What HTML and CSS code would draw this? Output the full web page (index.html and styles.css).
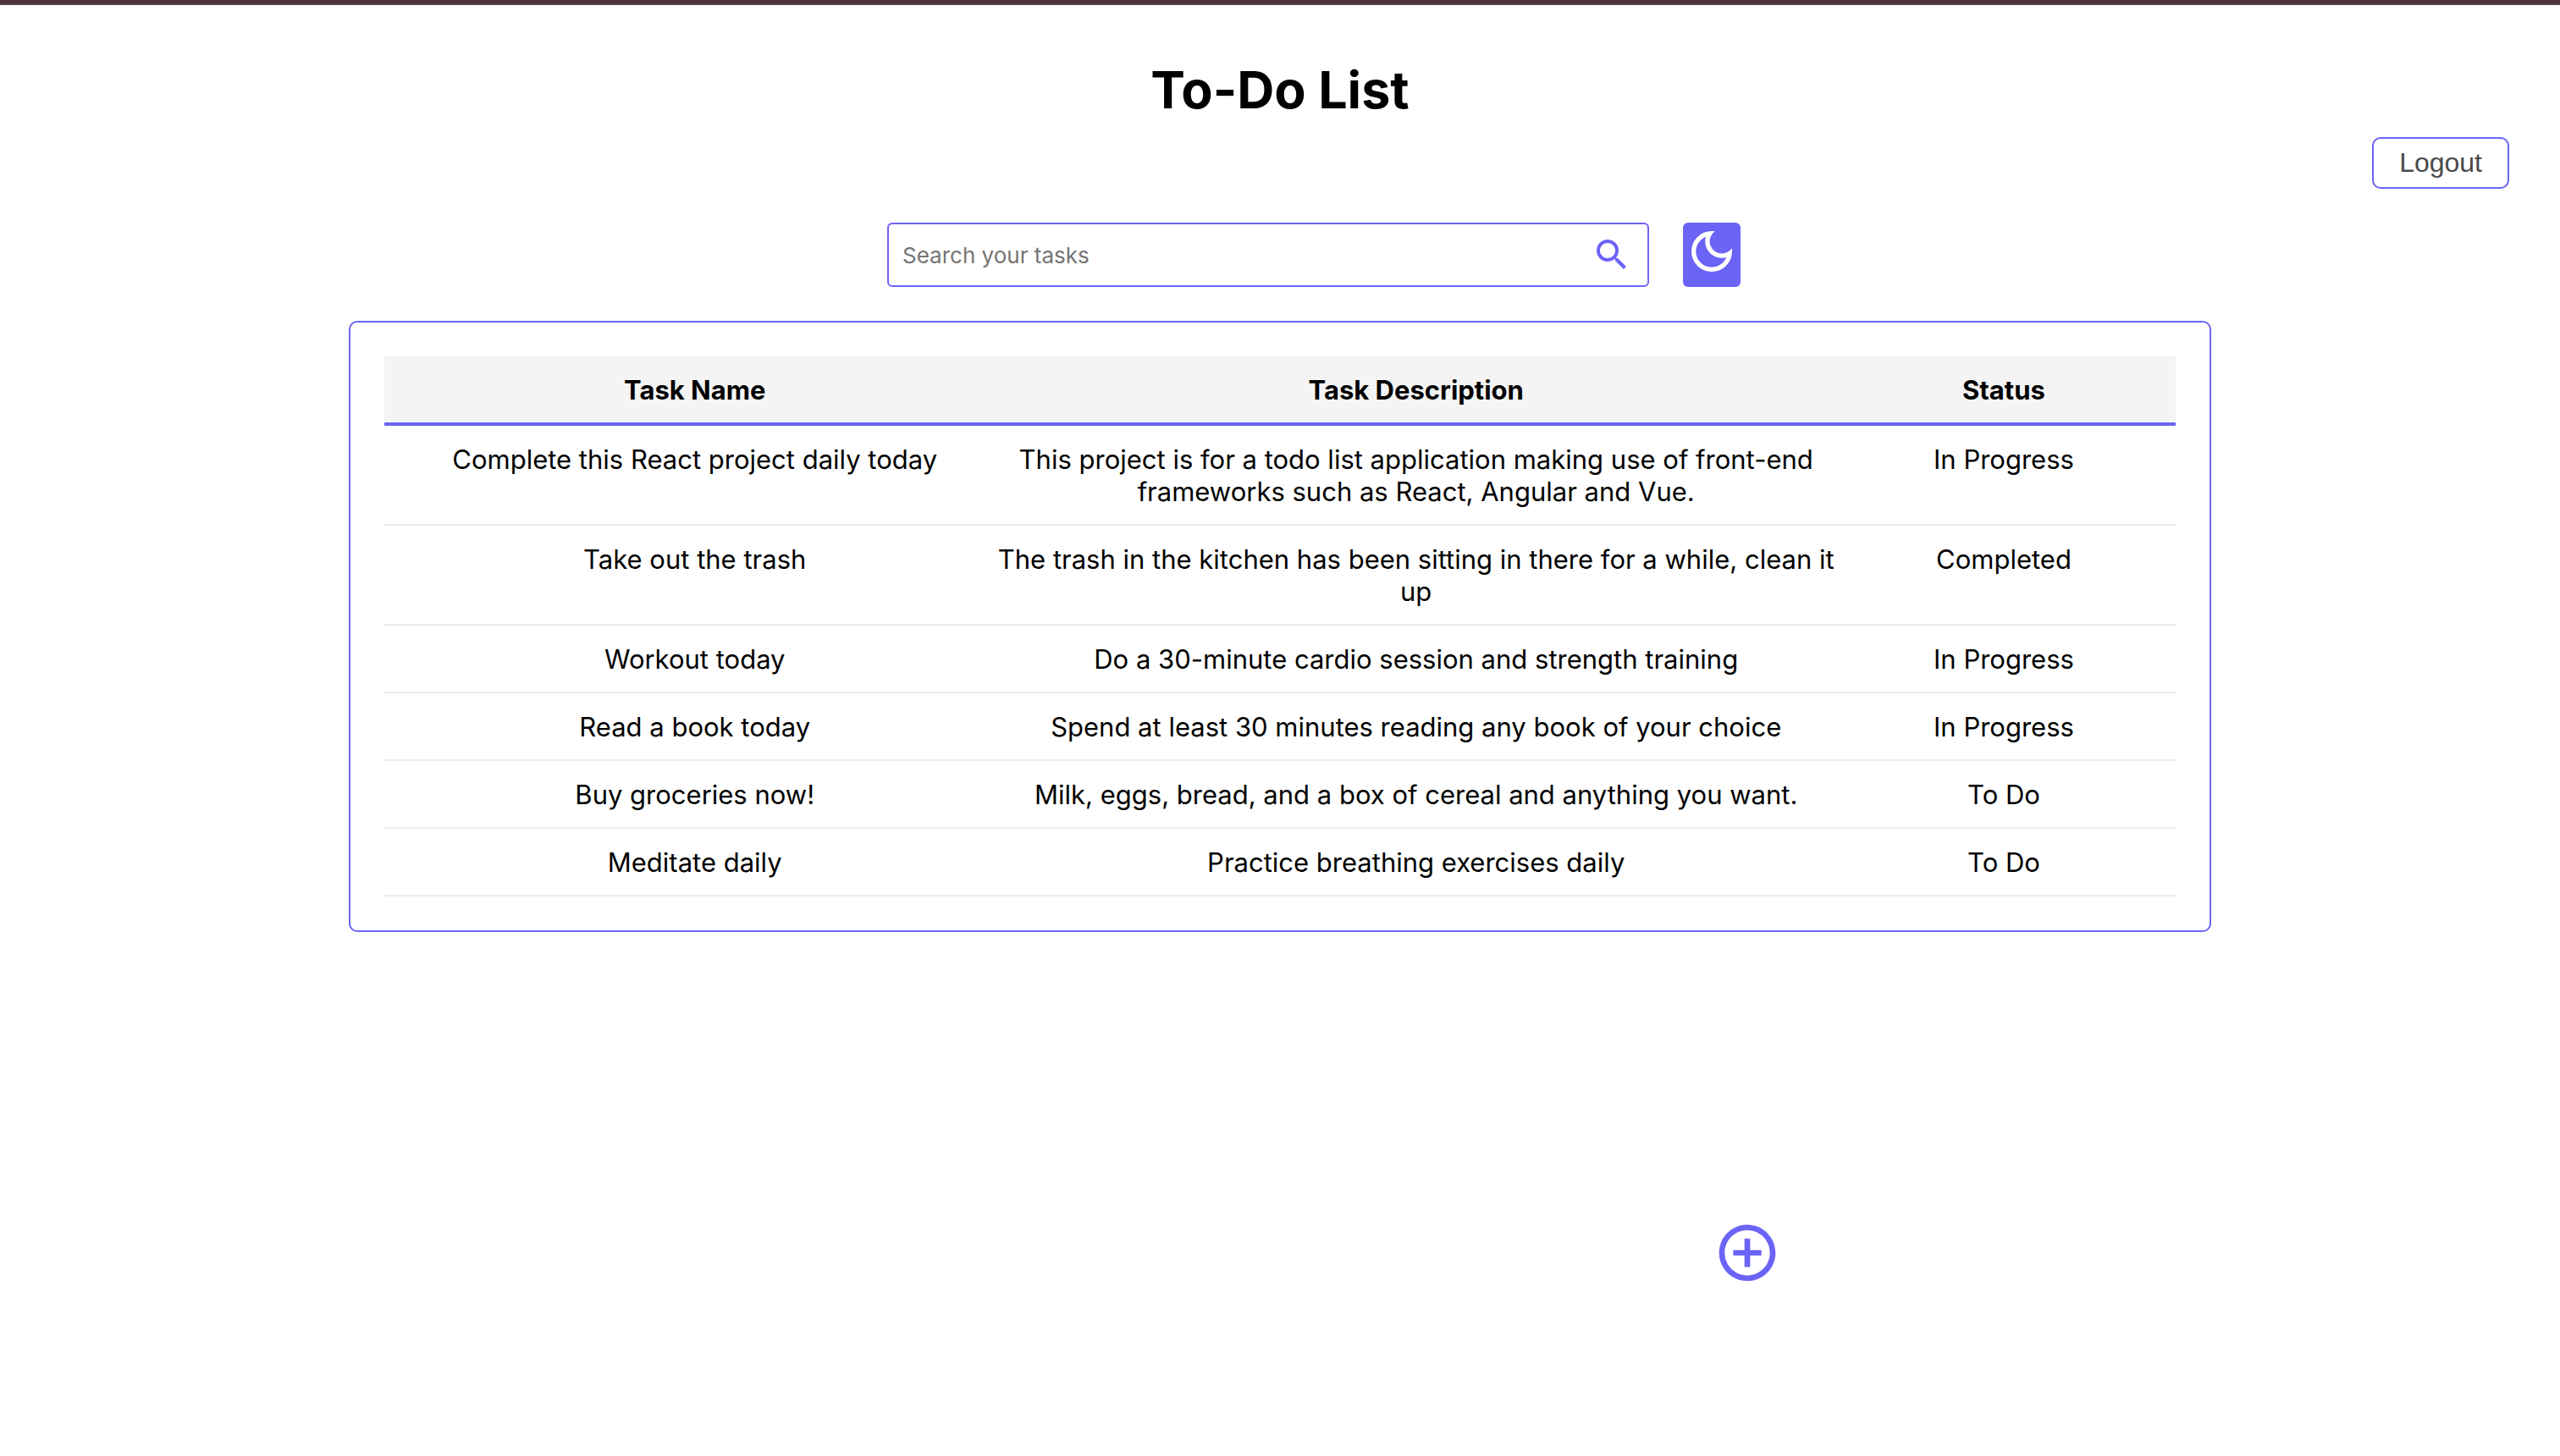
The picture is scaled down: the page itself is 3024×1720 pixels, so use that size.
FILE: index.html
```html
<!DOCTYPE html>
<html lang="en">
<head>
  <meta charset="utf-8">
  <meta name="viewport" content="width=device-width, initial-scale=1">
  <title>To-Do List</title>
  <link rel="stylesheet" href="styles.css">
</head>
<body>
  <div class="page">
    <header class="header">
      <h1 class="title">To-Do List</h1>
      <button class="logout" type="button">Logout</button>
    </header>

    <div class="toolbar">
      <form class="search" role="search">
        <input class="search-input" type="search" placeholder="Search your tasks" aria-label="Search your tasks">
        <button class="search-button" type="submit" aria-label="Search">
          <svg class="search-icon" viewBox="0 0 24 24" aria-hidden="true"><path d="M15.5 14h-.79l-.28-.27A6.471 6.471 0 0 0 16 9.5 6.5 6.5 0 1 0 9.5 16c1.61 0 3.09-.59 4.23-1.57l.27.28v.79l5 4.99L20.49 19l-4.99-5zm-6 0C7.01 14 5 11.99 5 9.5S7.01 5 9.5 5 14 7.01 14 9.5 11.99 14 9.5 14z"/></svg>
        </button>
      </form>
      <button class="theme-toggle" type="button" aria-label="Switch to dark mode">
        <svg class="moon-icon" viewBox="0 0 24 24" aria-hidden="true"><path d="M9.37 5.51c-.18.64-.27 1.31-.27 1.99 0 4.08 3.32 7.4 7.4 7.4.68 0 1.35-.09 1.99-.27C17.45 17.19 14.93 19 12 19c-3.86 0-7-3.14-7-7 0-2.93 1.81-5.45 4.37-6.49zM12 3a9 9 0 1 0 9 9c0-.46-.04-.92-.1-1.36a5.389 5.389 0 0 1-4.4 2.26 5.403 5.403 0 0 1-3.14-9.8c-.44-.06-.9-.1-1.36-.1z"/></svg>
      </button>
    </div>

    <main class="card">
      <table class="tasks">
        <colgroup>
          <col class="col-name">
          <col class="col-description">
          <col class="col-status">
        </colgroup>
        <thead>
          <tr><th scope="col">Task Name</th><th scope="col">Task Description</th><th scope="col">Status</th></tr>
        </thead>
        <tbody>
          <tr><td>Complete this React project daily today</td><td>This project is for a todo list application making use of front-end frameworks such as React, Angular and Vue.</td><td>In Progress</td></tr>
          <tr><td>Take out the trash</td><td>The trash in the kitchen has been sitting in there for a while, clean it up</td><td>Completed</td></tr>
          <tr><td>Workout today</td><td>Do a 30-minute cardio session and strength training</td><td>In Progress</td></tr>
          <tr><td>Read a book today</td><td>Spend at least 30 minutes reading any book of your choice</td><td>In Progress</td></tr>
          <tr><td>Buy groceries now!</td><td>Milk, eggs, bread, and a box of cereal and anything you want.</td><td>To Do</td></tr>
          <tr><td>Meditate daily</td><td>Practice breathing exercises daily</td><td>To Do</td></tr>
        </tbody>
      </table>
    </main>

    <footer class="actions">
      <button class="add" type="button" aria-label="Add task">
        <svg class="add-icon" viewBox="0 0 24 24" aria-hidden="true"><path d="M13 7h-2v4H7v2h4v4h2v-4h4v-2h-4V7zm-1-5C6.48 2 2 6.48 2 12s4.48 10 10 10 10-4.48 10-10S17.52 2 12 2zm0 18c-4.41 0-8-3.59-8-8s3.59-8 8-8 8 3.59 8 8-3.59 8-8 8z"/></svg>
      </button>
    </footer>
  </div>
</body>
</html>
```
FILE: styles.css
```css
:root {
  --accent: #6c63f7;
  --text: #000;
}

* {
  box-sizing: border-box;
}

body {
  margin: 0;
  border-top: 4px solid #4b3338;
  background: #fff;
  color: var(--text);
  font-family: Inter, "Liberation Sans", sans-serif;
  font-size: 31px;
  line-height: 38px;
}

button {
  padding: 0;
  border: 0;
  background: none;
  cursor: pointer;
}

svg {
  display: block;
  fill: currentColor;
}

.page {
  display: flex;
  flex-direction: column;
  min-height: calc(100vh - 4px);
  border-top: 2px solid #5a454a;
}

.header {
  display: flex;
  flex-direction: column;
  padding: 60px 60px 0;
}

.title {
  margin: 0 0 16px;
  font-size: 61px;
  line-height: 80px;
  text-align: center;
}

.logout {
  align-self: flex-end;
  padding: 10px 30px;
  border: 2px solid var(--accent);
  border-radius: 10px;
  color: #4a4a4a;
  font-family: "Liberation Sans", Arial, sans-serif;
  font-size: 32px;
  line-height: 37px;
}

.toolbar {
  display: flex;
  justify-content: center;
  gap: 40px;
  padding: 40px 0 40px 80px;
}

.search {
  display: flex;
  align-items: center;
  width: 900px;
  height: 76px;
  padding: 0 18px 0 16px;
  border: 2px solid var(--accent);
  border-radius: 6px;
}

.search-input {
  flex: 1;
  min-width: 0;
  padding: 2px 0 0;
  border: 0;
  outline: 0;
  background: none;
  font-family: inherit;
  font-size: 26px;
  line-height: 32px;
}

.search-input::placeholder {
  color: #757575;
}

.search-button {
  color: var(--accent);
}

.search-icon {
  width: 48px;
  height: 48px;
}

.theme-toggle {
  display: flex;
  align-items: flex-start;
  padding: 2px;
  border-radius: 6px;
  background: var(--accent);
  color: #fff;
}

.moon-icon {
  width: 64px;
  height: 64px;
}

.card {
  width: 100%;
  max-width: 2200px;
  margin: 0 auto;
  padding: 40px;
  border: 2px solid var(--accent);
  border-radius: 10px;
}

.tasks {
  width: 100%;
  table-layout: fixed;
  border-spacing: 0;
  text-align: center;
}

.col-name {
  width: 34%;
}

.col-description {
  width: 47%;
}

.col-status {
  width: 19%;
}

.tasks th,
.tasks td {
  padding: 21px 0 19px;
  vertical-align: top;
}

.tasks th {
  border-bottom: 4px solid var(--accent);
  background: #f4f4f4;
}

.tasks td {
  border-bottom: 2px solid #ececec;
}

.tasks th:first-child,
.tasks td:first-child {
  padding-left: 14px;
}

.tasks th:nth-child(2),
.tasks td:nth-child(2) {
  padding-left: 4px;
}

.tasks th:last-child,
.tasks td:last-child {
  padding-right: 4px;
}

.actions {
  display: flex;
  justify-content: flex-end;
  width: 100%;
  max-width: 1184px;
  margin: auto auto 0;
  padding: 40px 0 200px;
}

.add {
  color: var(--accent);
}

.add-icon {
  width: 80px;
  height: 80px;
}
```
